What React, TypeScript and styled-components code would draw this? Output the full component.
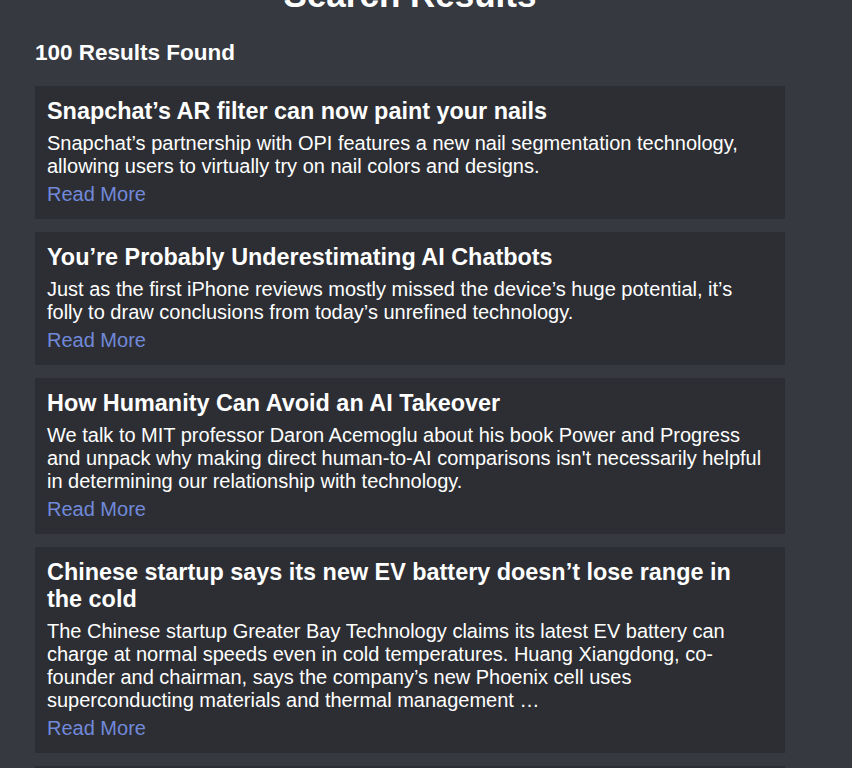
import React from "react";
import styled, { createGlobalStyle } from "styled-components";

const GlobalStyle = createGlobalStyle`
  html, body {
    margin: 0;
    padding: 0;
    background: #36393f;
    font-family: "Liberation Sans", Arial, sans-serif;
    color: #ffffff;
    overflow: hidden;
  }
`;

const Page = styled.main`
  width: 750px;
  padding: 0 0 0 35px;
  box-sizing: content-box;
  font-size: 20px;
`;

const Heading = styled.h1`
  margin: -25px 0 25px;
  font-size: 35px;
  font-weight: 700;
  text-align: center;
  line-height: normal;
`;

const Count = styled.h2`
  margin: 0 0 20px;
  font-size: 22.5px;
  font-weight: 700;
  line-height: normal;
`;

const List = styled.div`
  display: flex;
  flex-direction: column;
  gap: 13px;
`;

const Card = styled.article`
  background: #2c2e33;
  padding: 12px 16px 13.5px 12px;
`;

const Title = styled.h3`
  margin: 0 0 6.5px;
  font-size: 1.17em;
  font-weight: 700;
  line-height: normal;
`;

const Summary = styled.p`
  margin: 0 0 5px;
  font-size: 20px;
  line-height: normal;
`;

const ReadMore = styled.a`
  display: block;
  font-size: 20px;
  line-height: normal;
  color: #7289da;
  text-decoration: none;
`;

const results = [
  {
    title: "Snapchat’s AR filter can now paint your nails",
    summary:
      "Snapchat’s partnership with OPI features a new nail segmentation technology, allowing users to virtually try on nail colors and designs.",
  },
  {
    title: "You’re Probably Underestimating AI Chatbots",
    summary:
      "Just as the first iPhone reviews mostly missed the device’s huge potential, it’s folly to draw conclusions from today’s unrefined technology.",
  },
  {
    title: "How Humanity Can Avoid an AI Takeover",
    summary:
      "We talk to MIT professor Daron Acemoglu about his book Power and Progress and unpack why making direct human-to-AI comparisons isn't necessarily helpful in determining our relationship with technology.",
  },
  {
    title: "Chinese startup says its new EV battery doesn’t lose range in the cold",
    summary:
      "The Chinese startup Greater Bay Technology claims its latest EV battery can charge at normal speeds even in cold temperatures. Huang Xiangdong, co-founder and chairman, says the company’s new Phoenix cell uses superconducting materials and thermal management …",
  },
  {
    title: "The AI boom is here, and so are the questions",
    summary:
      "Generative AI tools are spreading quickly across industries, raising new questions about jobs, copyright and trust.",
  },
];

export default function App() {
  return (
    <>
      <GlobalStyle />
      <Page>
        <Heading>Search Results</Heading>
        <Count>100 Results Found</Count>
        <List>
          {results.map((r) => (
            <Card key={r.title}>
              <Title>{r.title}</Title>
              <Summary>{r.summary}</Summary>
              <ReadMore href="#">Read More</ReadMore>
            </Card>
          ))}
        </List>
      </Page>
    </>
  );
}
